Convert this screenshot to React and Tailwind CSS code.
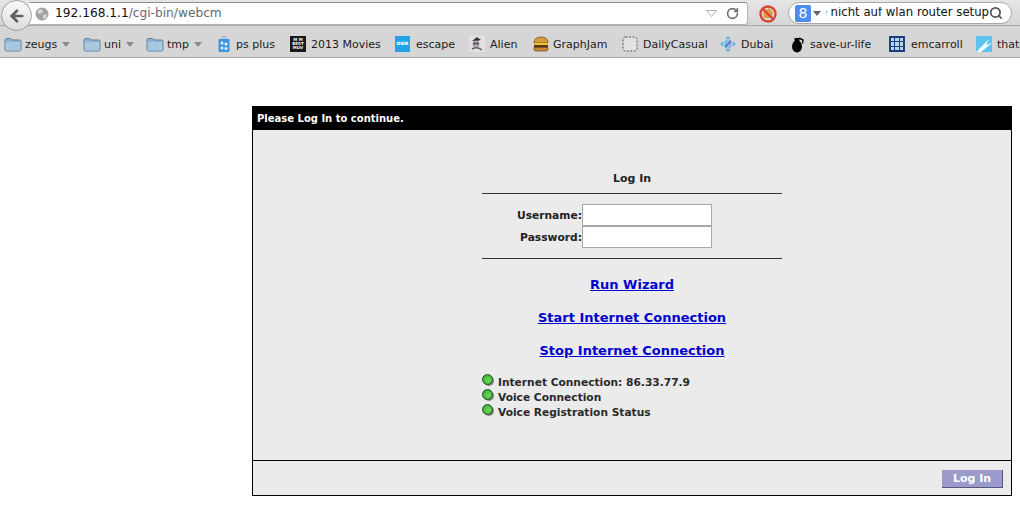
import { Search, RotateCw, ArrowLeft } from "lucide-react";

function Folder() {
  return (
    <svg width="18" height="15" viewBox="0 0 18 15" className="shrink-0">
      <path d="M1 3.5 Q1 1.5 3 1.5 H6.5 L8 3 H15.5 Q17 3 17 4.5 V12.5 Q17 14 15.5 14 H2.5 Q1 14 1 12.5 Z" fill="#8fb4d3" stroke="#5c7f9e" strokeWidth="1" />
      <path d="M1.6 5 H16.4 V12.5 Q16.4 13.4 15.5 13.4 H2.5 Q1.6 13.4 1.6 12.5 Z" fill="#a9c8e0" />
    </svg>
  );
}

function Caret() {
  return (
    <svg width="8" height="5" viewBox="0 0 8 5" className="shrink-0">
      <path d="M0 0 H8 L4 5 Z" fill="#8b8b8b" />
    </svg>
  );
}

function PsPlus() {
  return (
    <svg width="14" height="18" viewBox="0 0 14 18">
      <path d="M5 4 Q5 1 7 1 Q9 1 9 4" fill="none" stroke="#7aa7d8" strokeWidth="1" />
      <rect x="1.5" y="4" width="11" height="13" rx="1" fill="#3f97e0" />
      <circle cx="5" cy="8" r="1.5" fill="#dff0ff" />
      <circle cx="9" cy="9" r="1.5" fill="#dff0ff" />
      <circle cx="5" cy="13" r="1.5" fill="#dff0ff" />
      <circle cx="9" cy="13.5" r="1.5" fill="#dff0ff" />
    </svg>
  );
}

function Movies() {
  return (
    <div className="flex h-[16px] w-[16px] flex-col items-center justify-center bg-[#1a1a1a] text-[4px] leading-[4px] font-bold text-white">
      <span>M M</span>
      <span>BEST</span>
      <span>MOV</span>
    </div>
  );
}

function Escape() {
  return (
    <div className="flex h-[16px] w-[15px] items-start justify-center bg-[#1ea7e8] pt-[3px] text-[6px] leading-[7px] font-bold text-white">
      ose
    </div>
  );
}

function Alien() {
  return (
    <svg width="16" height="16" viewBox="0 0 16 16">
      <rect width="16" height="16" fill="#e4e0e4" />
      <path d="M3 5 L8 1 L12 4 L8 5 Z" fill="#333" />
      <circle cx="7" cy="8" r="3.5" fill="#a9a2aa" />
      <circle cx="5.5" cy="7.5" r="1" fill="#222" />
      <circle cx="8.5" cy="7.5" r="1" fill="#222" />
      <path d="M3 13 Q8 10 13 14" fill="none" stroke="#6a5a70" strokeWidth="1.5" />
    </svg>
  );
}

function Burger() {
  return (
    <svg width="16" height="16" viewBox="0 0 16 16">
      <path d="M1 7 Q1 1 8 1 Q15 1 15 7 Z" fill="#d99a3c" stroke="#6b4413" strokeWidth="0.7" />
      <rect x="1" y="7" width="14" height="2" fill="#e5c53a" />
      <rect x="1" y="9" width="14" height="2.5" fill="#5e3212" />
      <path d="M1 11.5 H15 V13 Q15 15 13 15 H3 Q1 15 1 13 Z" fill="#c98a34" stroke="#6b4413" strokeWidth="0.7" />
    </svg>
  );
}

function Dashed() {
  return (
    <svg width="16" height="16" viewBox="0 0 16 16">
      <rect x="1" y="1" width="14" height="14" rx="2.5" fill="#e2e2e2" stroke="#555" strokeWidth="1" strokeDasharray="2 1.5" />
    </svg>
  );
}

function Dubai() {
  return (
    <svg width="16" height="16" viewBox="0 0 16 16">
      <path d="M8 0 L11 3 H5 Z M8 16 L5 13 H11 Z M0 8 L3 5 V11 Z M16 8 L13 11 V5 Z" fill="#63b3de" />
      <circle cx="8" cy="8" r="4.5" fill="#8fb7e0" />
      <path d="M5 11 L11 5" stroke="#3d76b8" strokeWidth="1.5" />
    </svg>
  );
}

function Grenade() {
  return (
    <svg width="16" height="17" viewBox="0 0 16 17">
      <ellipse cx="7" cy="10.5" rx="5" ry="6" fill="#050505" />
      <rect x="4.5" y="2" width="5" height="4" fill="#050505" />
      <path d="M9 2 L13 4 L12.5 7.5" fill="none" stroke="#050505" strokeWidth="1.4" />
    </svg>
  );
}

function Grid() {
  return (
    <div className="grid h-[16px] w-[16px] grid-cols-3 gap-px border-2 border-[#1c3f7d] bg-[#1c3f7d]">
      {Array.from({ length: 9 }).map((_, i) => (
        <span key={i} className="bg-[#b9d3ea]" />
      ))}
    </div>
  );
}

function Thatg() {
  return (
    <svg width="16" height="16" viewBox="0 0 16 16" className="shrink-0">
      <rect width="16" height="16" fill="#5ec3ee" />
      <path d="M0 16 L13 3 L10 9 L16 7 L5 16 Z" fill="#f2fbff" />
    </svg>
  );
}

const bookmarks = [
  { icon: <Folder />, label: "zeugs", menu: true, w: 79, gap: 3 },
  { icon: <Folder />, label: "uni", menu: true, w: 63, gap: 3 },
  { icon: <Folder />, label: "tmp", menu: true, w: 71, gap: 3 },
  { icon: <PsPlus />, label: "ps plus", w: 73, gap: 5 },
  { icon: <Movies />, label: "2013 Movies", w: 105, gap: 5 },
  { icon: <Escape />, label: "escape", w: 74, gap: 6 },
  { icon: <Alien />, label: "Alien", w: 64, gap: 5 },
  { icon: <Burger />, label: "GraphJam", w: 89, gap: 4 },
  { icon: <Dashed />, label: "DailyCasual", w: 98, gap: 5 },
  { icon: <Dubai />, label: "Dubai", w: 70, gap: 5 },
  { icon: <Grenade />, label: "save-ur-life", w: 99, gap: 4 },
  { icon: <Grid />, label: "emcarroll", w: 87, gap: 6 },
  { icon: <Thatg />, label: "thatg", w: 60, gap: 5 },
];

function StatusDot() {
  return (
    <span className="relative mt-[-2px] block h-[13px] w-[13px] shrink-0">
      <span className="absolute left-[2px] top-[2px] h-[10px] w-[10px] rounded-full bg-[#8a8a8a]" />
      <span className="absolute left-0 top-0 h-[11px] w-[11px] rounded-full border border-[#1d4f1d] bg-[radial-gradient(circle_at_60%_60%,#6fdc5f,#2f9f2c)]" />
    </span>
  );
}

const statuses = ["Internet Connection: 86.33.77.9", "Voice Connection", "Voice Registration Status"];
const links = ["Run Wizard", "Start Internet Connection", "Stop Internet Connection"];

export default function App() {
  return (
    <div className="h-[522px] w-[1020px] overflow-hidden bg-white font-['DejaVu_Sans',sans-serif]">
      {/* browser chrome */}
      <div className="h-[58px] border-b border-[#a8a8a8] bg-[#d6d6d6]">
        <div className="flex h-[26px] items-start border-b border-[#a9a9a9] bg-gradient-to-b from-[#e6e6e6] to-[#d6d6d6] pl-[1px] pt-[2px]">
          <div className="z-10 mt-[-2px] flex h-[31px] w-[31px] shrink-0 items-center justify-center rounded-full border border-[#a0a0a0] bg-gradient-to-b from-[#fafafa] to-[#dcdcdc]">
            <ArrowLeft size={18} strokeWidth={3.5} className="text-[#5f5f5f]" />
          </div>
          <div className="ml-[-3px] flex h-[23px] w-[719px] shrink-0 items-center rounded-r-[3px] border border-t-[#8f8f8f] border-r-[#b4b4b4] border-b-[#b4b4b4] border-l-transparent bg-white pl-[5px] pr-[5px]">
            <svg width="14" height="14" viewBox="0 0 14 14" className="shrink-0">
              <circle cx="7" cy="7" r="6.5" fill="#a2a2a2" />
              <path d="M3 3 L7 2 L8 5 L5 7 L3 6 Z M8 8 L12 7 L11 11 L8 12 Z" fill="#d8d8d8" />
            </svg>
            <span className="ml-[6px] text-[12.2px] leading-none text-[#5f6b76]">
              <span className="text-[#111]">192.168.1.1</span>/cgi-bin/webcm
            </span>
            <svg width="11" height="7" viewBox="0 0 11 7" className="ml-auto mr-[9px]">
              <path d="M0.5 0.5 H10.5 L5.5 6.5 Z" fill="none" stroke="#b0b0b0" />
            </svg>
            <RotateCw size={13} strokeWidth={3} className="mr-[3px] text-[#707070]" />
          </div>
          <svg width="20" height="20" viewBox="0 0 20 20" className="ml-[10px] mt-[2px] shrink-0">
            <path d="M5 8 L11 4 L15 8 L14 14 H6 Z" fill="#e39a3e" />
            <circle cx="10" cy="10" r="7.5" fill="none" stroke="#d6473a" strokeWidth="2.4" />
            <path d="M5 5 L15 15" stroke="#d6473a" strokeWidth="2.4" />
          </svg>
          <div className="ml-[10px] flex h-[22px] w-[224px] shrink-0 items-center overflow-hidden rounded-full border border-[#a9a9a9] bg-white pl-[6px]">
            <span className="flex h-[17px] w-[16px] shrink-0 items-center justify-center rounded-[2px] bg-[#4d8df0] text-[14px] leading-none text-white">
              8
            </span>
            <svg width="8" height="5" viewBox="0 0 8 5" className="ml-[2px] shrink-0">
              <path d="M0 0 H8 L4 5 Z" fill="#666" />
            </svg>
            <span className="ml-[5px] w-[163px] shrink-0 overflow-hidden whitespace-nowrap text-[11.7px] leading-none text-[#111] [direction:rtl]">
              e nicht auf wlan router setup
            </span>
            <Search size={14} strokeWidth={3} className="shrink-0 text-[#555]" />
          </div>
        </div>
        <div className="flex h-[31px] items-center overflow-hidden whitespace-nowrap pl-[4px] pt-[5px] text-[11px] leading-none text-[#1c1c1c]">
          {bookmarks.map((b) => (
            <div key={b.label} className="flex shrink-0 items-center" style={{ width: b.w }}>
              {b.icon}
              <span style={{ marginLeft: b.gap }}>{b.label}</span>
              {b.menu && (
                <span className="ml-[5px]">
                  <Caret />
                </span>
              )}
            </div>
          ))}
        </div>
      </div>

      {/* router login panel */}
      <div className="ml-[252px] mt-[48px] w-[760px] border border-black">
        <div className="flex h-[23px] items-center bg-black pl-[4px] text-[10px] font-bold text-white">
          Please Log In to continue.
        </div>
        <div className="flex h-[330px] flex-col items-center bg-[#ebebeb] text-[#222]">
          <div className="mt-[42px] text-[11px] leading-[14px] font-bold">Log In</div>
          <div className="mt-[7px] w-[300px] border-t border-[#333]" />
          <div className="mt-[10px] flex w-[300px] flex-col">
            {["Username:", "Password:"].map((label) => (
              <div key={label} className="flex items-center">
                <span className="w-[100px] pt-[2px] text-right text-[10.7px] font-bold">{label}</span>
                <span className="block h-[22px] w-[130px] border border-[#a8a8a8] bg-white" />
              </div>
            ))}
          </div>
          <div className="mt-[10px] w-[300px] border-t border-[#333]" />
          <div className="mt-[17px] flex flex-col items-center gap-[15px]">
            {links.map((l) => (
              <a key={l} href="#" className="text-[13px] leading-[18px] font-bold text-[#0000d0] underline">
                {l}
              </a>
            ))}
          </div>
          <div className="mt-[14px] flex w-[300px] flex-col">
            {statuses.map((s) => (
              <div key={s} className="flex h-[15px] items-center gap-[3px] text-[10.65px] font-bold text-[#2a2a2a]">
                <StatusDot />
                <span className="pt-[3px]">{s}</span>
              </div>
            ))}
          </div>
        </div>
        <div className="flex h-[35px] items-center justify-end border-t border-black bg-[#ebebeb] pr-[8px]">
          <button className="mt-[1px] h-[18px] w-[61px] border-r border-b border-[#55557f] bg-[#9a9acb] pt-[1px] text-[11px] leading-none font-bold text-white">
            Log In
          </button>
        </div>
      </div>
    </div>
  );
}
